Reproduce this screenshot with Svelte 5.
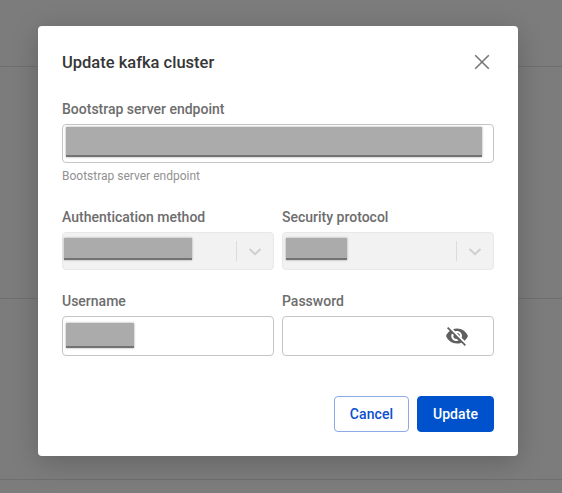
<script>
  let authMethod = "";
  let showPassword = false;
</script>

<div class="page">
  <div class="bg-row first"></div>
  <div class="bg-row second"></div>
  <div class="bg-row third"></div>
  <div class="bg-row last"></div>

  <div class="modal">
    <header class="modal-head">
      <h2>Update kafka cluster</h2>
      <button class="close" aria-label="Close">
        <svg width="16" height="16" viewBox="0 0 16 16" fill="none" stroke="#777" stroke-width="1.6">
          <path d="M1.2 1.2l13.6 13.6M14.8 1.2L1.2 14.8" />
        </svg>
      </button>
    </header>

    <div class="field endpoint">
      <label for="endpoint">Bootstrap server endpoint</label>
      <div class="input tall" id="endpoint">
        <span class="redact full"></span>
      </div>
      <small>Bootstrap server endpoint</small>
    </div>

    <div class="two-col selects">
      <div class="field">
        <span class="label">Authentication method</span>
        <div class="select">
          <span class="redact auth">{authMethod}</span>
          <span class="sep"></span>
          <svg class="chev" width="14" height="8" viewBox="0 0 14 8" fill="none" stroke="#cfcfcf" stroke-width="2">
            <path d="M1.5 1l5.5 5.2L12.500 1" />
          </svg>
        </div>
      </div>
      <div class="field">
        <span class="label">Security protocol</span>
        <div class="select">
          <span class="redact proto"></span>
          <span class="sep"></span>
          <svg class="chev" width="14" height="8" viewBox="0 0 14 8" fill="none" stroke="#cfcfcf" stroke-width="2">
            <path d="M1.5 1l5.5 5.2L12.500 1" />
          </svg>
        </div>
      </div>
    </div>

    <div class="two-col creds">
      <div class="field">
        <span class="label">Username</span>
        <div class="input">
          <span class="redact user"></span>
        </div>
      </div>
      <div class="field">
        <span class="label">Password</span>
        <div class="input pass">
          <button class="eye" aria-label="Toggle password" on:click={() => (showPassword = !showPassword)}>
            <svg width="24" height="24" viewBox="0 0 24 24" fill="#5f5f5f">
              <path d="M12 7c2.760 0 5 2.240 5 5 0 .65-.13 1.260-.36 1.830l2.920 2.920c1.510-1.260 2.700-2.890 3.430-4.750-1.730-4.390-6-7.500-11-7.500-1.400 0-2.740.25-3.980.7l2.160 2.160C10.740 7.130 11.350 7 12 7zM2 4.270l2.280 2.280.46.460C3.080 8.300 1.780 10.020 1 12c1.730 4.390 6 7.500 11 7.500 1.550 0 3.030-.3 4.380-.84l.42.420L19.730 22 21 20.730 3.270 3 2 4.270zM7.530 9.800l1.550 1.550c-.05.21-.8.430-.8.650 0 1.660 1.340 3 3 3 .22 0 .44-.3.650-.08l1.550 1.550c-.67.330-1.410.53-2.200.53-2.760 0-5-2.240-5-5 0-.79.200-1.530.53-2.200zm4.310-.78l3.150 3.150.02-.16c0-1.660-1.340-3-3-3l-.17.010z" />
            </svg>
          </button>
        </div>
      </div>
    </div>

    <footer class="actions">
      <button class="btn cancel">Cancel</button>
      <button class="btn primary">Update</button>
    </footer>
  </div>
</div>

<style>
  :global(body) {
    margin: 0;
    background: #7c7c7c;
    font-family: Roboto, "Liberation Sans", sans-serif;
  }
  .page {
    position: relative;
    height: 493px;
    overflow: hidden;
    background: #7c7c7c;
  }
  .bg-row {
    border-bottom: 1px solid #6f6f6f;
    box-sizing: border-box;
  }
  .first { height: 67px; }
  .second { height: 232px; }
  .third { height: 181px; }
  .last { border: 0; }

  .modal {
    position: absolute;
    top: 26px;
    left: 38px;
    width: 480px;
    height: 430px;
    box-sizing: border-box;
    padding: 0 24px;
    background: #fff;
    border-radius: 4px;
    box-shadow: 0 6px 28px rgba(0, 0, 0, 0.2);
  }
  .modal-head {
    display: flex;
    align-items: center;
    justify-content: space-between;
    height: 72px;
    margin-bottom: 2px;
  }
  h2 {
    margin: 0;
    font-size: 16.5px;
    font-weight: 500;
    color: #363636;
  }
  .close {
    display: flex;
    border: 0;
    padding: 0;
    margin-right: 4px;
    background: none;
  }
  .field {
    display: flex;
    flex-direction: column;
    min-width: 0;
  }
  label,
  .label {
    font-size: 14px;
    font-weight: 500;
    line-height: 18px;
    color: #6d6d6d;
    margin-bottom: 6px;
  }
  .endpoint {
    height: 102px;
  }
  small {
    margin-top: 5px;
    font-size: 12px;
    line-height: 16px;
    color: #919191;
  }
  .two-col {
    display: grid;
    grid-template-columns: 1fr 1fr;
    gap: 8px;
  }
  .selects {
    margin-top: 6px;
  }
  .creds {
    margin-top: 22px;
  }
  .input,
  .select {
    display: flex;
    align-items: center;
    box-sizing: border-box;
    border-radius: 4px;
  }
  .input {
    height: 40px;
    padding-left: 3px;
    border: 1px solid #c4c4c4;
    background: #fff;
  }
  .input.tall {
    height: 39px;
  }
  .select {
    height: 38px;
    padding-left: 1px;
    background: #f2f2f2;
    border: 1px solid #e8e8e8;
  }
  .redact {
    display: block;
    box-sizing: border-box;
    background: #ababab;
    border-bottom: 2px solid #737373;
    box-shadow: 0 0 2px rgba(120, 120, 120, 0.7);
  }
  .full { width: 416px; height: 30px; margin-bottom: 3px; }
  .auth { width: 128px; height: 22px; margin-bottom: 5px; }
  .proto { width: 61px; height: 22px; margin-bottom: 5px; margin-left: 2px; }
  .user { width: 68px; height: 25px; margin-bottom: 2px; }
  .sep {
    width: 1px;
    height: 20px;
    margin-left: auto;
    background: #dcdcdc;
  }
  .chev {
    margin: 1px 11px 0 11px;
  }
  .pass {
    justify-content: flex-end;
    padding-right: 24px;
  }
  .eye {
    display: flex;
    border: 0;
    padding: 0;
    background: none;
  }
  .actions {
    position: absolute;
    right: 24px;
    bottom: 24px;
    display: flex;
    gap: 8px;
  }
  .btn {
    height: 36px;
    border-radius: 4px;
    box-sizing: border-box;
    font-family: inherit;
    font-size: 14px;
    font-weight: 500;
    letter-spacing: 0.1px;
  }
  .cancel {
    width: 75px;
    background: #fff;
    border: 1px solid #8ea9ea;
    color: #0b4fce;
  }
  .primary {
    width: 77px;
    background: #0052cc;
    border: 1px solid #0052cc;
    color: #fff;
  }
</style>
